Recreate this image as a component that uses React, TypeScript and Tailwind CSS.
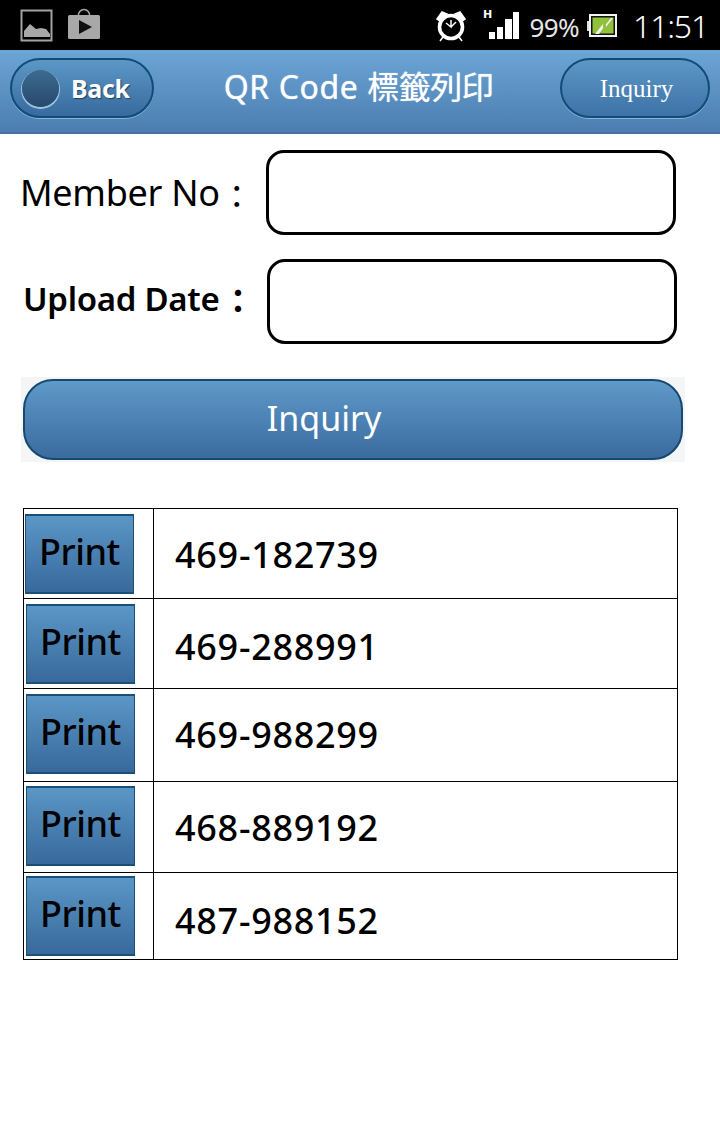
const sans = "font-['Noto_Sans','Noto_Sans_CJK_TC',sans-serif]";

function StatusBar() {
  return (
    <div className="h-[50px] bg-black flex items-center pl-[20px] pr-[12px] shrink-0">
      <svg width="33" height="33" viewBox="0 0 33 33" className="mt-[1px]">
        <rect x="1.5" y="1.5" width="30" height="30" fill="none" stroke="#a3a3a3" strokeWidth="2" />
        <path d="M4 28 V22 L10 15 L16 20 L21 19 L26 20 L30 25 V28 Z" fill="#a8a8a8" />
      </svg>
      <svg width="32" height="32" viewBox="0 0 32 32" className="ml-[15px] -mt-[2px]">
        <path d="M10 9 C10 -1 22 -1 22 9" fill="none" stroke="#a3a3a3" strokeWidth="1.5" />
        <rect x="0" y="7" width="32" height="24" rx="1.5" fill="#a8a8a8" />
        <path d="M11 12 L24 19 L11 26 Z" fill="#111" />
      </svg>
      <div className="flex-1" />
      <svg width="32" height="32" viewBox="0 0 32 32" className="mt-[2px]">
        <circle cx="16" cy="17" r="11.5" fill="none" stroke="#fff" strokeWidth="3.6" />
        <path d="M16 10 V17 L11 13 M16 17 L21 12" fill="none" stroke="#fff" strokeWidth="1.5" />
        <path d="M2 9 L7 2 L12 4 L5 11 Z M30 9 L25 2 L20 4 L27 11 Z M8 27 L5 31 M24 27 L27 31" fill="#fff" stroke="#fff" strokeWidth="1.5" />
      </svg>
      <svg width="38" height="44" viewBox="0 -6 38 44" className="ml-[15px]">
        <text x="1" y="9" fill="#fff" fontSize="11" fontWeight="700" fontFamily="'DejaVu Sans',sans-serif">H</text>
        <rect x="7" y="23" width="6" height="7" fill="#fff" />
        <rect x="15" y="18" width="6" height="12" fill="#fff" />
        <rect x="23" y="10" width="7" height="20" fill="#fff" />
        <rect x="31" y="3" width="6" height="27" fill="#fff" />
      </svg>
      <span className={`${sans} text-[#e6e6e6] text-[26px] leading-none ml-[10px] tracking-[-0.6px] mt-[3px]`}>99%</span>
      <svg width="30" height="24" viewBox="0 0 30 24" className="ml-[8px] mt-[2px]">
        <rect x="0" y="7" width="2" height="10" fill="#ddd" />
        <rect x="3" y="1" width="26" height="21" fill="#111" stroke="#f2f2f2" strokeWidth="2" />
        <rect x="5.5" y="3.5" width="21" height="16" fill="#8fc13c" />
        <path d="M8 20 L16 10 L16 14 L24 4 L26 4 L19 13 L19 10 L12 20 Z" fill="#f4f4f4" />
      </svg>
      <span className={`${sans} text-white text-[32px] leading-none ml-[16px] mt-[1px] font-light tracking-[-1.2px]`}>11:51</span>
    </div>
  );
}

function Header() {
  return (
    <div className="h-[84px] shrink-0 bg-gradient-to-b from-[#6ba6d6] to-[#4c7db0] border-b-2 border-[#4a6ea5] flex items-start pl-[10px] pr-[10px] pt-[8px]">
      <div className="w-[144px] h-[60px] rounded-full border-2 border-[#0f4c78] bg-gradient-to-b from-[#5b98c7] to-[#386a9e] flex items-center pl-[10px] shadow-[0_1px_0_#8ab8dc]">
        <div className="w-[37px] h-[37px] rounded-full bg-gradient-to-b from-[#3d6b92] to-[#28496b] shadow-[0_1px_0_1px_#9cc4e2]" />
        <span className={`${sans} text-white font-bold text-[25px] leading-none ml-[12px] [text-shadow:1px_1px_1px_#1e3f60] tracking-[-0.3px]`}>Back</span>
      </div>
      <div className={`${sans} flex-1 text-center text-white text-[32px] leading-none tracking-[0.6px] pl-[3px] mt-[13px] [text-shadow:0_0_1px_#dfeefa]`}>
        QR Code <span className="tracking-[-0.5px]">標籤列印</span>
      </div>
      <div className="w-[150px] h-[60px] rounded-full border-2 border-[#0f4c78] bg-gradient-to-b from-[#5b98c7] to-[#3e72a6] flex items-center justify-center pl-[3px] shadow-[0_1px_0_#8ab8dc]">
        <span className="font-['Liberation_Serif',serif] text-white text-[25px] leading-none">Inquiry</span>
      </div>
    </div>
  );
}

function FormRow({ label, bold, className, labelClass, colonClass }: { label: string; bold?: boolean; className: string; labelClass: string; colonClass: string }) {
  return (
    <div className={`flex items-center h-[85px] ${className}`}>
      <span className={`${sans} text-black leading-none whitespace-pre ${bold ? "font-semibold text-[33px] tracking-[-0.3px]" : "text-[36px] tracking-[-0.3px]"} ${labelClass}`}>
        {label}
        <span className={`inline-block translate-y-[2px] ${colonClass}`}>：</span>
      </span>
      <div className="h-[85px] w-[410px] border-[3px] border-black rounded-[18px] bg-white ml-auto" />
    </div>
  );
}

const ROWS = [
  { code: "469-182739", h: "h-[90px]", btn: "ml-[1px]", top: "mt-[5px]", numTop: "mt-[3px]" },
  { code: "469-288991", h: "h-[90px]", btn: "ml-[2px]", top: "mt-[5px]", numTop: "mt-[7px]" },
  { code: "469-988299", h: "h-[93px]", btn: "ml-[2px]", top: "mt-[5px]", numTop: "-mt-[1px]" },
  { code: "468-889192", h: "h-[91px]", btn: "ml-[2px]", top: "mt-[4px]", numTop: "mt-[1px]" },
  { code: "487-988152", h: "h-[87px]", btn: "ml-[2px]", top: "mt-[3px]", numTop: "mt-[9px]" },
];

function PrintTable() {
  return (
    <div className="ml-[23px] w-[655px] mt-[46px] border border-black border-b-0">
      {ROWS.map((r) => (
        <div key={r.code} className={`flex ${r.h} border-b border-black`}>
          <div className="w-[130px] border-r border-black shrink-0">
            <div className={`${r.top} ${r.btn} w-[109px] h-[80px] border-y-2 border-x border-[#1a4f78] bg-gradient-to-b from-[#5a97c6] to-[#39699c] flex justify-center pt-[13px]`}>
              <span className={`${sans} font-medium text-black text-[36px] leading-[46px] tracking-[-0.5px]`}>Print</span>
            </div>
          </div>
          <div className="flex-1 flex items-center pl-[21px]">
            <span className={`${sans} ${r.numTop} font-medium text-black text-[36px] leading-none tracking-[0.7px]`}>{r.code}</span>
          </div>
        </div>
      ))}
    </div>
  );
}

export default function App() {
  return (
    <div className="w-[720px] h-[1122px] bg-white flex flex-col overflow-hidden">
      <StatusBar />
      <Header />
      <div className="flex flex-col">
        <FormRow label="Member No" colonClass="ml-[1px] text-[32px]" className="mt-[16px] ml-[20px] w-[656px]" labelClass="" />
        <FormRow label="Upload Date" colonClass="ml-[2px]" bold className="mt-[24px] ml-[23px] w-[654px]" labelClass="pb-[6px]" />
        <div className="mt-[33px] ml-[21px] w-[664px] h-[85px] bg-[#f3f5f6] flex items-center pl-[2px]">
          <div className="w-[660px] h-[81px] rounded-[30px] border-2 border-[#17486e] bg-gradient-to-b from-[#5f9ac9] to-[#3b6b9f] flex items-center justify-center">
            <span className={`${sans} text-white text-[34px] leading-none pr-[58px] -mt-[3px]`}>Inquiry</span>
          </div>
        </div>
        <PrintTable />
      </div>
    </div>
  );
}
